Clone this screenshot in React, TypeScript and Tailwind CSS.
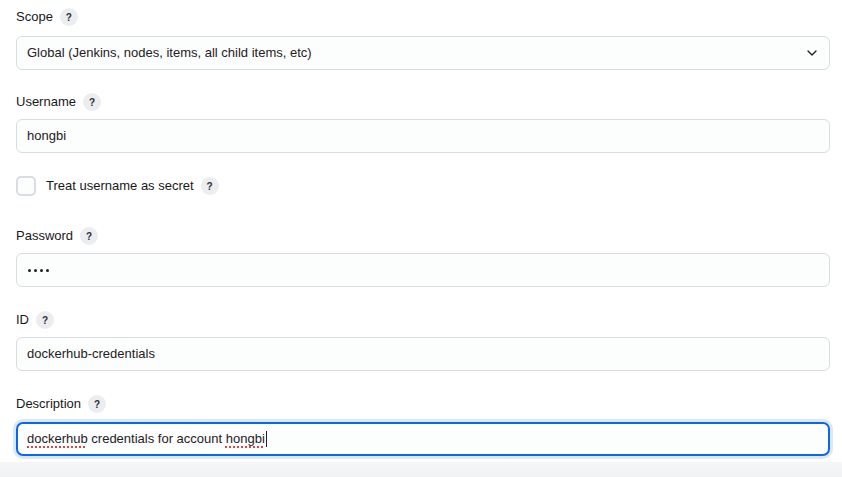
import { ChevronDown } from 'lucide-react'

function Help() {
  return (
    <span className="ml-[7px] inline-flex h-[18px] w-[18px] items-center justify-center rounded-full bg-[#ebedf0] text-[10px] font-bold text-[#2b2d31]">
      ?
    </span>
  )
}

function Label({ text }: { text: string }) {
  return (
    <div className="flex h-[20px] items-center text-[13px] text-[#17181a]">
      <span>{text}</span>
      <Help />
    </div>
  )
}

function TextBox({ value, masked }: { value: string; masked?: boolean }) {
  return (
    <div className="mt-[7px] flex h-[34px] items-center rounded-[6px] border border-[#d9dde2] bg-[#fcfdfd] px-[10px] text-[13px] text-[#1f2023]">
      {masked ? (
        <span className="ml-[1px] flex gap-[3px]">
          <span className="h-[3px] w-[3px] rounded-full bg-[#1f2023]" />
          <span className="h-[3px] w-[3px] rounded-full bg-[#1f2023]" />
          <span className="h-[3px] w-[3px] rounded-full bg-[#1f2023]" />
          <span className="h-[3px] w-[3px] rounded-full bg-[#1f2023]" />
        </span>
      ) : (
        value
      )}
    </div>
  )
}

export default function App() {
  return (
    <div className="relative h-[477px] w-[842px] overflow-hidden bg-white" style={{ fontFamily: '"Liberation Sans", Arial, sans-serif' }}>
      <div className="pl-[16px] pr-[12px] pt-[7px]">
        <Label text="Scope" />
        <div className="mt-[9px] flex h-[34px] items-center justify-between rounded-[6px] border border-[#d9dde2] bg-[#fcfdfd] pl-[10px] pr-[9px] text-[13px] text-[#1f2023]">
          <span>Global (Jenkins, nodes, items, all child items, etc)</span>
          <ChevronDown size={16} strokeWidth={2} className="text-[#1f2023]" />
        </div>

        <div className="mt-[22px]">
          <Label text="Username" />
          <TextBox value="hongbi" />
        </div>

        <div className="mt-[23px] flex h-[20px] items-center text-[13px] text-[#17181a]">
          <span className="mr-[10px] h-[20px] w-[20px] rounded-[5px] border-2 border-[#d9dde2] bg-[#fcfdfd]" />
          <span>Treat username as secret</span>
          <Help />
        </div>

        <div className="mt-[30px]">
          <Label text="Password" />
          <TextBox value="" masked />
        </div>

        <div className="mt-[23px]">
          <Label text="ID" />
          <TextBox value="dockerhub-credentials" />
        </div>

        <div className="mt-[23px]">
          <Label text="Description" />
          <div className="mt-[8px] flex h-[34px] items-center rounded-[7px] border-2 border-[#0a68e8] bg-[#fcfdfd] px-[9px] text-[13px] text-[#1f2023] shadow-[0_0_0_3px_#dbe7fb]">
            <span className="underline decoration-dotted decoration-[#e0443e] decoration-2 underline-offset-[3px]">dockerhub</span>
            <span className="whitespace-pre"> credentials for account </span>
            <span className="underline decoration-dotted decoration-[#e0443e] decoration-2 underline-offset-[3px]">hongbi</span>
            <span className="ml-[1px] h-[16px] w-[1px] bg-[#1f2023]" />
          </div>
        </div>
      </div>
      <div className="absolute bottom-0 left-0 h-[15px] w-full bg-gradient-to-b from-[#f6f6f7] to-[#f1f2f3]" />
    </div>
  )
}
